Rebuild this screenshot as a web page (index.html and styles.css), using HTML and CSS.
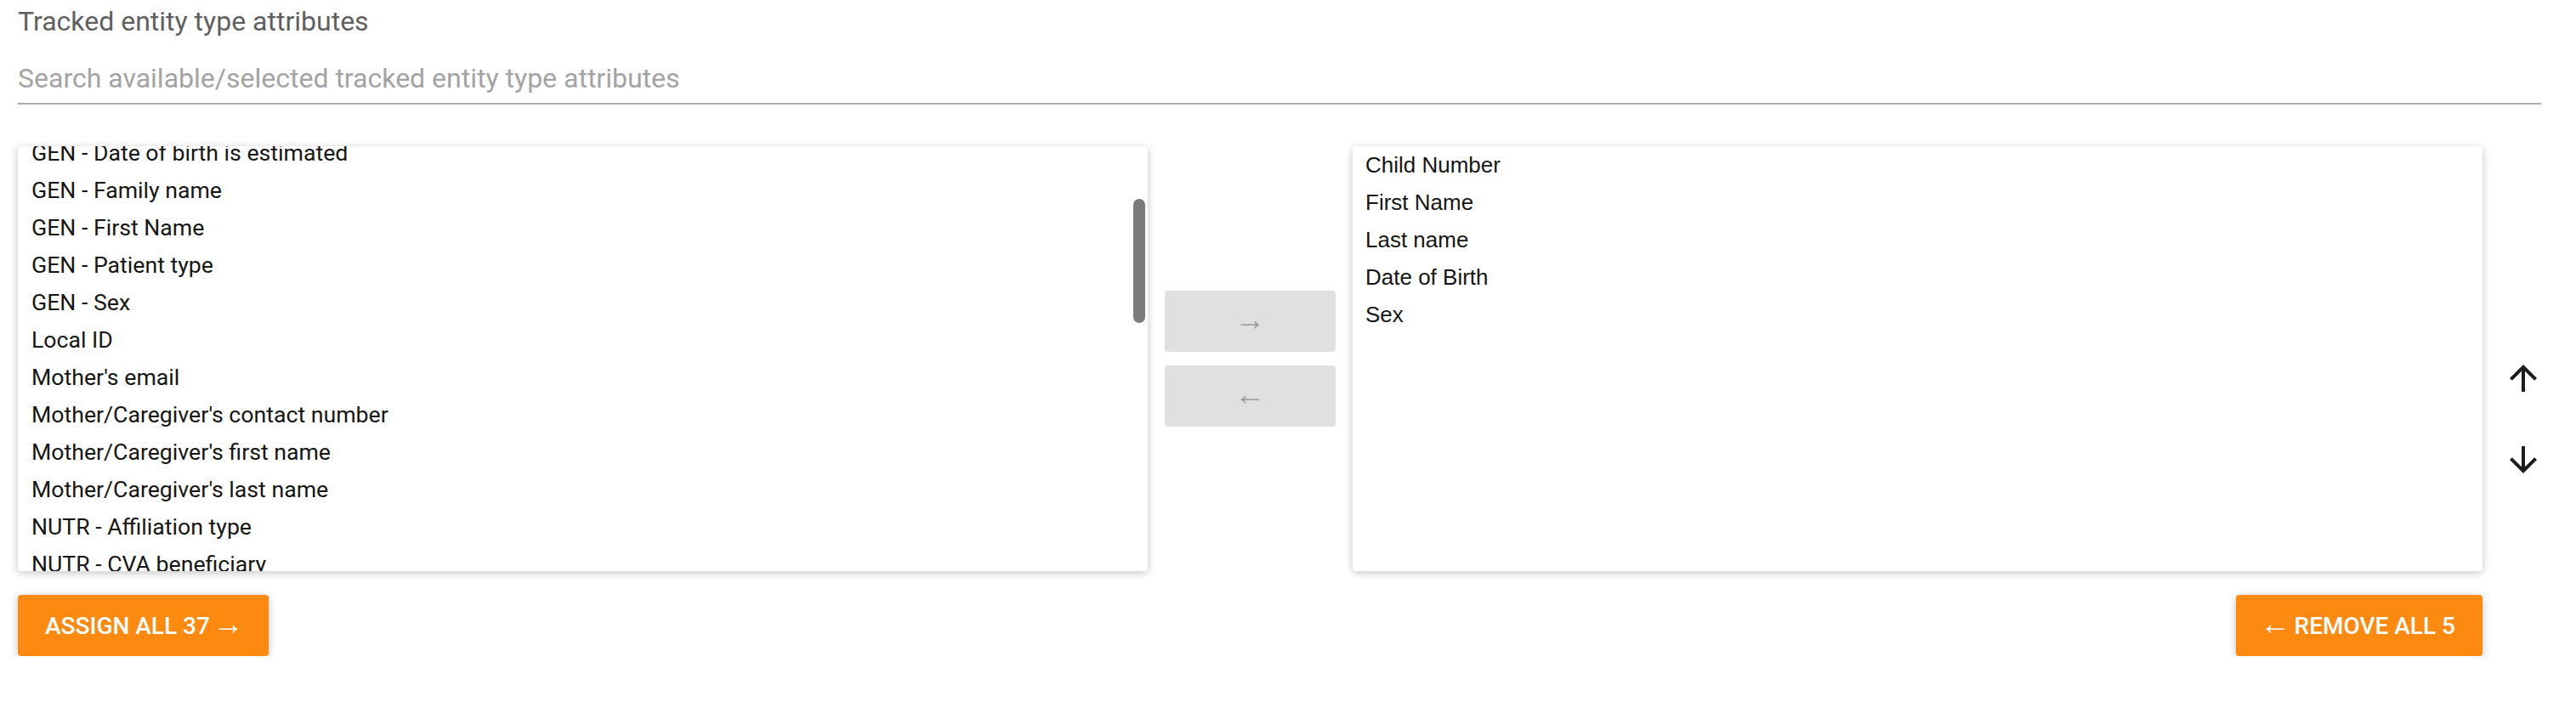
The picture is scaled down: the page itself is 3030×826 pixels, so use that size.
FILE: index.html
```html
<!DOCTYPE html>
<html>
<head>
    <title>Tracked entity type attributes</title>
    <meta charset="utf-8">
    <link rel="stylesheet" href="styles.css">
</head>
<body>
<div class="attribute-picker">
    <div class="field-label">Tracked entity type attributes</div>
    <input type="text" class="search-field" placeholder="Search available/selected tracked entity type attributes">

    <div class="lists-row">
        <div class="list-box">
            <!-- available list, scrolled part way down -->
            <ul class="item-list scrolled">
                <li>GEN - Date of birth is estimated</li>
                <li>GEN - Family name</li>
                <li>GEN - First Name</li>
                <li>GEN - Patient type</li>
                <li>GEN - Sex</li>
                <li>Local ID</li>
                <li>Mother's email</li>
                <li>Mother/Caregiver's contact number</li>
                <li>Mother/Caregiver's first name</li>
                <li>Mother/Caregiver's last name</li>
                <li>NUTR - Affiliation type</li>
                <li>NUTR - CVA beneficiary</li>
            </ul>
            <div class="scroll-thumb"></div>
        </div>

        <div class="move-buttons">
            <button class="move-button" disabled><span class="arrow">→</span></button>
            <button class="move-button" disabled><span class="arrow">←</span></button>
        </div>

        <div class="list-box">
            <ul class="item-list selected-list">
                <li>Child Number</li>
                <li>First Name</li>
                <li>Last name</li>
                <li>Date of Birth</li>
                <li>Sex</li>
            </ul>
        </div>

        <div class="order-buttons">
            <button class="icon-button">
                <svg viewBox="0 0 24 24"><path d="M4 12l1.41 1.41L11 7.83V20h2V7.83l5.58 5.59L20 12l-8-8-8 8z"/></svg>
            </button>
            <button class="icon-button">
                <svg viewBox="0 0 24 24"><path d="M20 12l-1.41-1.41L13 16.17V4h-2v12.17l-5.58-5.59L4 12l8 8 8-8z"/></svg>
            </button>
        </div>
    </div>

    <div class="bulk-row">
        <button class="bulk-button">Assign all 37 <span class="arrow">→</span></button>
        <button class="bulk-button"><span class="arrow">←</span> Remove all 5</button>
    </div>
</div>
</body>
</html>
```

FILE: styles.css
```css
body {
    margin: 0;
    font-family: Roboto, "Liberation Sans", Arial, sans-serif;
    background-color: #fff;
}
.attribute-picker {
    padding: 0 41px 0 21px;
}
.field-label {
    padding-top: 5px;
    font-size: 32px;
    line-height: 40px;
    color: #5f5f5f;
}
.search-field {
    display: block;
    width: 100%;
    height: 78px;
    box-sizing: border-box;
    padding: 18px 0 0;
    border: 0;
    border-bottom: 2px solid #acacac;
    font-family: Roboto, sans-serif;
    font-size: 32px;
    background: transparent;
    outline: none;
}
.search-field::placeholder {
    color: #a3a3a3;
}

.lists-row {
    display: flex;
    margin-top: 49px;
    height: 500px;
}
.list-box {
    position: relative;
    flex: none;
    width: 1329px;
    height: 500px;
    background-color: #fff;
    border-radius: 4px;
    box-shadow: 0 2px 12px rgba(0, 0, 0, 0.12), 0 2px 8px rgba(0, 0, 0, 0.12);
    overflow: hidden;
}
.item-list {
    list-style: none;
    margin: 0;
    padding: 0 16px;
}
.item-list li {
    height: 44px;
    line-height: 44px;
    font-size: 26.67px;
    color: #161616;
    white-space: nowrap;
}
.item-list.scrolled {
    margin-top: -14px;
}
.selected-list {
    padding-left: 15px;
}
.selected-list li {
    font-family: "Liberation Sans", Arial, sans-serif;
    font-size: 26px;
}
.scroll-thumb {
    position: absolute;
    top: 62px;
    right: 3px;
    width: 14px;
    height: 146px;
    border-radius: 7px;
    background-color: #7b7b7b;
}

.move-buttons {
    flex: none;
    display: flex;
    flex-direction: column;
    justify-content: center;
    gap: 16px;
    width: 201px;
    padding: 0 20px;
}
.move-button {
    height: 72px;
    border: 0;
    border-radius: 4px;
    background-color: #e0e0e0;
    color: #9a9a9a;
    font-family: Roboto, sans-serif;
    font-size: 28px;
}
.arrow {
    font-size: 36px;
    line-height: 0;
}
.bulk-button .arrow {
    margin: 0 -3px;
}

.order-buttons {
    flex: none;
    display: flex;
    flex-direction: column;
    width: 96px;
    padding-top: 225px;
}
.icon-button {
    width: 96px;
    height: 96px;
    padding: 24px;
    border: 0;
    background: none;
}
.icon-button svg {
    display: block;
    width: 48px;
    height: 48px;
    fill: #1c1c1c;
}

.bulk-row {
    display: flex;
    justify-content: space-between;
    width: 2899px;
    margin-top: 28px;
}
.bulk-button {
    height: 72px;
    padding: 0 32px;
    border: 0;
    border-radius: 4px;
    background-color: #fd8a10;
    color: #fff;
    font-family: Roboto, sans-serif;
    font-size: 28px;
    font-weight: 500;
    text-transform: uppercase;
    white-space: nowrap;
    box-shadow: 0 2px 12px rgba(0, 0, 0, 0.12), 0 2px 8px rgba(0, 0, 0, 0.12);
}
```
